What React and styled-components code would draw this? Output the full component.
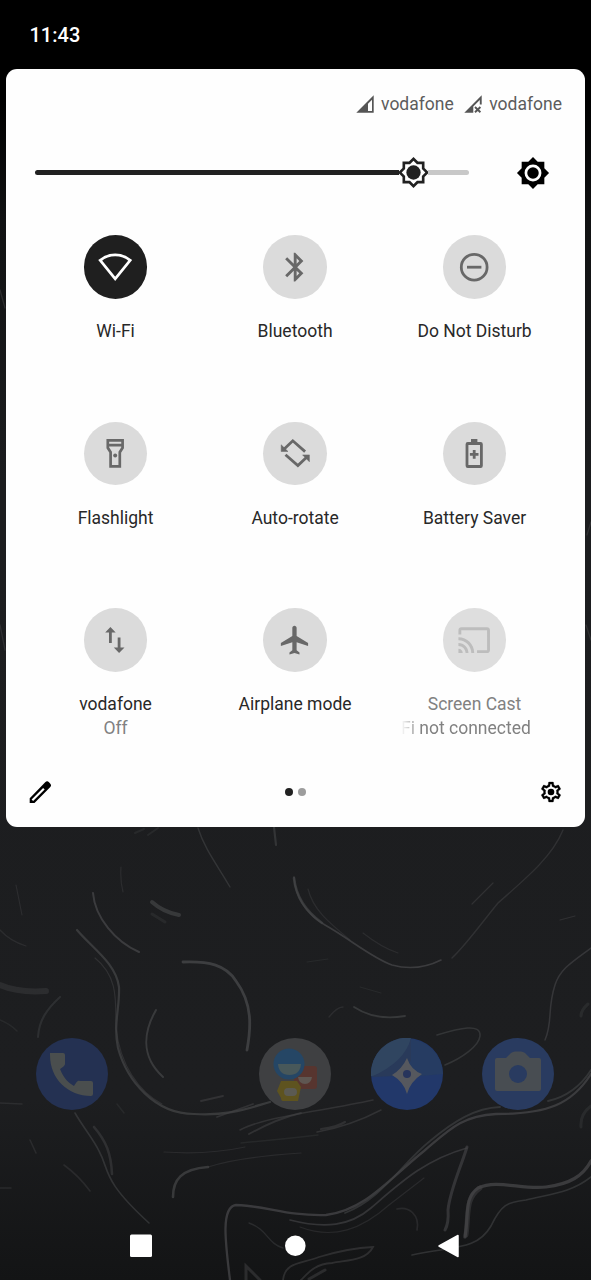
import React from "react";
import styled, { createGlobalStyle } from "styled-components";

const GlobalStyle = createGlobalStyle`
  * { box-sizing: border-box; }
  body { margin: 0; background: #000; font-family: Roboto, "Liberation Sans", sans-serif; }
`;

const Phone = styled.div`
  position: relative;
  width: 591px;
  height: 1280px;
  overflow: hidden;
  display: flex;
  flex-direction: column;
  background: linear-gradient(#000 0, #000 100px, #111213 220px, #1c1d1f 480px, #1d1e20 1100px, #131415 1280px);
`;

const WallpaperArt = styled.svg`
  position: absolute;
  inset: 0;
  fill: none;
  stroke: #434446;
  stroke-linecap: round;
  filter: blur(0.7px);
`;

const StatusBar = styled.header`
  position: relative;
  height: 69px;
  flex: none;
  padding: 23px 29.5px 0;
  background: #000;
  color: #fff;
  font-size: 20px;
  font-weight: 500;
  line-height: 24px;
`;

const Panel = styled.main`
  position: relative;
  flex: none;
  height: 757.5px;
  margin: 0 6px;
  border-radius: 11px;
  background: #fefefe;
  display: flex;
  flex-direction: column;
`;

const Carriers = styled.div`
  display: flex;
  flex: none;
  justify-content: flex-end;
  align-items: center;
  gap: 10.5px;
  height: 24px;
  margin: 22.5px 23px 0 0;
`;

const Carrier = styled.div`
  display: flex;
  align-items: center;
  gap: 7px;
  color: #5c5c5c;
  font-size: 17.5px;
`;

const BrightnessRow = styled.div`
  display: flex;
  align-items: center;
  justify-content: space-between;
  height: 40px;
  flex: none;
  margin: 37px 35px 0 29px;
`;

const Slider = styled.div`
  display: flex;
  align-items: center;
  width: 434px;
`;

const Track = styled.div`
  height: 4.6px;
  width: ${(p) => p.$width}px;
  background: ${(p) => (p.$filled ? "#212121" : "#c8c8c8")};
  border-radius: ${(p) => (p.$filled ? "3px 0 0 3px" : "0 3px 3px 0")};
`;

const Thumb = styled.svg`
  flex: none;
  margin: 0 -2px;
`;

const Tiles = styled.section`
  display: grid;
  flex: none;
  grid-template-columns: repeat(3, 179.5px);
  grid-template-rows: 186.5px 186.5px 132px;
  margin: 42.5px 0 0 19.8px;
`;

const TileBox = styled.div`
  display: flex;
  flex-direction: column;
  align-items: center;
`;

const TileIcon = styled.div`
  display: flex;
  flex: none;
  align-items: center;
  justify-content: center;
  width: 63.6px;
  height: 63.6px;
  border-radius: 50%;
  margin-bottom: 20.8px;
  background: ${(p) => (p.$active ? "#1f1f1f" : p.$disabled ? "#dedede" : "#dbdbdb")};
  color: ${(p) => (p.$active ? "#fff" : p.$disabled ? "#bdbdbd" : "#686868")};
`;

const Label = styled.div`
  height: 23.6px;
  line-height: 24px;
  font-size: 17.5px;
  white-space: nowrap;
  color: ${(p) => (p.$muted ? "#818181" : "#282828")};
`;

const ScrollingLabel = styled(Label)`
  width: 147px;
  -webkit-mask-image: linear-gradient(90deg, transparent 0, #000 20px);
  mask-image: linear-gradient(90deg, transparent 0, #000 20px);
`;

const Footer = styled.footer`
  display: flex;
  align-items: center;
  justify-content: space-between;
  height: 24px;
  flex: none;
  margin: auto 22.5px 22.5px 22px;
`;

const Pager = styled.div`
  display: flex;
  gap: 5.5px;
`;

const Dot = styled.i`
  width: 8px;
  height: 8px;
  border-radius: 50%;
  background: ${(p) => (p.$on ? "#212121" : "#9d9d9d")};
`;

const Dock = styled.nav`
  position: relative;
  display: grid;
  grid-template-columns: repeat(5, 111.6px);
  justify-items: center;
  margin: 211.5px 0 0 16.2px;
  height: 72px;
`;

const NavBar = styled.nav`
  position: relative;
  display: flex;
  justify-content: space-between;
  align-items: center;
  height: 24px;
  margin: 123.5px 131px 0 129px;
`;

const STAR =
  "M20 8.69V4h-4.69L12 .69 8.69 4H4v4.69L.69 12 4 15.31V20h4.69L12 23.31 15.31 20H20v-4.69L23.31 12 20 8.69z";
const GEAR =
  "M19.43 12.98c.04-.32.07-.64.07-.98 0-.34-.03-.66-.07-.98l2.11-1.65c.19-.15.24-.42.12-.64l-2-3.46c-.09-.16-.26-.25-.44-.25-.06 0-.12.01-.17.03l-2.49 1c-.52-.4-1.08-.73-1.69-.98l-.38-2.65C14.46 2.18 14.25 2 14 2h-4c-.25 0-.46.18-.49.42l-.38 2.65c-.61.25-1.17.59-1.69.98l-2.49-1c-.06-.02-.12-.03-.18-.03-.17 0-.34.09-.43.25l-2 3.46c-.13.22-.07.49.12.64l2.11 1.65c-.04.32-.07.65-.07.98 0 .33.03.66.07.98l-2.11 1.65c-.19.15-.24.42-.12.64l2 3.46c.09.16.26.25.44.25.06 0 .12-.01.17-.03l2.49-1c.52.4 1.08.73 1.69.98l.38 2.65c.03.24.24.42.49.42h4c.25 0 .46-.18.49-.42l.38-2.65c.61-.25 1.17-.59 1.69-.98l2.49 1c.06.02.12.03.18.03.17 0 .34-.09.43-.25l2-3.46c.12-.22.07-.49-.12-.64l-2.11-1.65zm-1.98-1.71c.04.31.05.52.05.73 0 .21-.02.43-.05.73l-.14 1.13.89.7 1.08.84-.7 1.21-1.27-.51-1.04-.42-.9.68c-.43.32-.84.56-1.25.73l-1.06.43-.16 1.13-.2 1.35h-1.4l-.19-1.35-.16-1.13-1.06-.43c-.43-.18-.83-.41-1.23-.71l-.91-.7-1.06.43-1.27.51-.7-1.21 1.08-.84.89-.7-.14-1.13c-.03-.31-.05-.54-.05-.74s.02-.43.05-.73l.14-1.13-.89-.7-1.08-.84.7-1.21 1.27.51 1.04.42.9-.68c.43-.32.84-.56 1.25-.73l1.06-.43.16-1.13.2-1.35h1.39l.19 1.35.16 1.13 1.06.43c.43.18.83.41 1.23.71l.91.7 1.06-.43 1.27-.51.7 1.21-1.07.85-.89.7.14 1.13z";

const Glyph = ({ children }) => (
  <svg width="34.4" height="34.4" viewBox="0 0 24 24" fill="currentColor">{children}</svg>
);
const LineGlyph = ({ children }) => (
  <svg width="34.4" height="34.4" viewBox="-17.2 -17.2 34.4 34.4" fill="none" stroke="currentColor" strokeWidth="2.8">{children}</svg>
);

const icons = {
  wifi: <LineGlyph><path d="M-15-6.9C-6-14 6-14 15-6.9L0 11.6Z" /></LineGlyph>,
  bluetooth: (
    <Glyph><path d="M17.71 7.71L12 2h-1v7.59L6.41 5 5 6.41 10.59 12 5 17.59 6.41 19 11 14.41V22h1l5.71-5.71-4.3-4.29 4.3-4.29zM13 5.83l1.88 1.88L13 9.59V5.83zm1.88 10.46L13 18.17v-3.76l1.88 1.88z" /></Glyph>
  ),
  dnd: <LineGlyph><circle r="12.9" /><path d="M-7.2 0H7.2" /></LineGlyph>,
  flashlight: (
    <LineGlyph>
      <path d="M-7.4-12.9H7.4V-5.4L4.6-1V13.2H-4.6V-1L-7.4-5.4ZM-7.4-8H7.4" strokeWidth="2.7" />
      <circle cy="2.4" r="2" fill="currentColor" stroke="none" />
    </LineGlyph>
  ),
  rotate: (
    <LineGlyph>
      <path d="M-11-4.3L-2.4-12.4L9.9-1.6M-9.7 1.5L2.7 12.4L11.2 4.3" />
      <path d="M-14-1.7V-8.4L-7.2-1.7ZM14.2 1.7V8.6L7.4 1.7Z" fill="currentColor" stroke="currentColor" strokeWidth=".5" />
    </LineGlyph>
  ),
  battery: (
    <LineGlyph>
      <rect x="-7.2" y="-9.7" width="14.4" height="23" rx=".8" />
      <path d="M-3.2-12.7H3.2M-4.3 1.2H4.3M0-3.1V5.5" />
    </LineGlyph>
  ),
  data: (
    <LineGlyph>
      <path d="M-4.8 2.8V-9M3.9-2.8V9" />
      <path d="M-10-7.7L-4.8-13.1L.5-7.7ZM-1.4 7.3H9.3L3.9 12.8Z" fill="currentColor" stroke="none" />
    </LineGlyph>
  ),
  airplane: (
    <Glyph><path d="M21 16v-2l-8-5V3.5c0-.83-.67-1.5-1.5-1.5S10 2.67 10 3.5V9l-8 5v2l8-2.5V19l-2 1.5V22l3.5-1 3.5 1v-1.5L13 19v-5.5l8 2.5z" /></Glyph>
  ),
  cast: (
    <Glyph><path d="M21 3H3c-1.1 0-2 .9-2 2v3h2V5h18v14h-7v2h7c1.1 0 2-.9 2-2V5c0-1.1-.9-2-2-2zM1 18v3h3c0-1.66-1.34-3-3-3zm0-4v2c2.76 0 5 2.24 5 5h2c0-3.87-3.13-7-7-7zm0-4v2c4.97 0 9 4.03 9 9h2c0-6.08-4.93-11-11-11z" /></Glyph>
  ),
};

const tiles = [
  { icon: "wifi", label: "Wi-Fi", active: true },
  { icon: "bluetooth", label: "Bluetooth" },
  { icon: "dnd", label: "Do Not Disturb" },
  { icon: "flashlight", label: "Flashlight" },
  { icon: "rotate", label: "Auto-rotate" },
  { icon: "battery", label: "Battery Saver" },
  { icon: "data", label: "vodafone", sub: "Off" },
  { icon: "airplane", label: "Airplane mode" },
  { icon: "cast", label: "Screen Cast", scrolling: "Fi not connected", disabled: true },
];

const Tile = ({ icon, label, sub, scrolling, active, disabled }) => (
  <TileBox>
    <TileIcon $active={active} $disabled={disabled}>{icons[icon]}</TileIcon>
    <Label $muted={disabled}>{label}</Label>
    {sub && <Label $muted>{sub}</Label>}
    {scrolling && <ScrollingLabel $muted>{scrolling}</ScrollingLabel>}
  </TileBox>
);

const Signal = ({ crossed }) => (
  <svg width="18" height="18" viewBox="0 0 18 18">
    {crossed ? (
      <g>
        <path d="M.3 17.7L17.7.3V9.5H15.8V5L9.3 11.5V17.7Z" fill="#555" />
        <path d="M11 12l5.4 5.2M16.4 12L11 17.2" stroke="#555" strokeWidth="1.9" />
      </g>
    ) : (
      <path d="M.3 17.7L17.7.3V17.7ZM16 4.7L12 8.7V16H16Z" fill="#555" fillRule="evenodd" />
    )}
  </svg>
);

// [path, stroke width, opacity]
const strands = [
  ["M198 828C205 850 218 866 230 887", 1.4, 0.6],
  ["M274 827L276 845", 2.2, 0.6],
  ["M294 877C295 898 308 915 325 925C350 939 372 958 392 965C410 970 427 967 441 960", 1.6, 0.8],
  ["M294 878C296 898 308 913 322 923", 2.6, 0.7],
  ["M308 889C313 909 327 921 350 940M363 933C377 944 386 949 398 953", 1.2, 0.4],
  ["M563 830C553 855 530 875 498 903C480 925 466 945 452 958", 1.4, 0.5],
  ["M472 904L493 883M560 920L575 916", 1.2, 0.5],
  ["M93 893C95 918 116 942 139 952", 2, 0.8],
  ["M121 867Q120 880 123 892M16 885L22 915M0 930Q10 941 26 946", 1.2, 0.4],
  ["M152 902Q163 912 179 915", 4, 0.7],
  ["M152 914L165 922", 3, 0.3],
  ["M135 833L144 829M148 835L158 828", 2, 0.3],
  ["M77 930C91 947 116 963 119 987C120 1007 113 1025 118 1048C127 1081 155 1114 194 1114C228 1116 246 1109 270 1102", 2.2, 0.75],
  ["M95 958C120 978 115 1005 116 1028C120 1065 139 1092 162 1104", 1.2, 0.5],
  ["M183 962C209 961 226 965 236 981C253 1004 251 1028 247 1050", 2.8, 0.85],
  ["M156 1010C144 1031 140 1056 163 1077", 2, 0.75],
  ["M0 985Q18 993 46 991", 6, 0.4],
  ["M60 997C47 1009 39 1020 38 1037", 2, 0.45],
  ["M354 1007Q375 1021 405 1016", 1.8, 0.7],
  ["M329 1017Q337 1007 343 1007", 1.3, 0.4],
  ["M360 987L381 993M307 962L328 959", 1.2, 0.3],
  ["M591 948C572 962 560 969 555 985C547 1009 553 1022 545 1040", 1.5, 0.65],
  ["M437 1035C460 1028 481 1023 480 1036C479 1046 462 1058 445 1065", 1.6, 0.6],
  ["M75 1113C83 1127 94 1140 99 1151C110 1171 101 1179 149 1223", 1.6, 0.6],
  ["M94 1127C106 1141 111 1153 112 1174", 2.6, 0.5],
  ["M64 1165Q79 1176 90 1191M0 1103L22 1104M30 1140L36 1153M0 1188H11", 1.6, 0.4],
  ["M117 1104L124 1113M0 1020Q10 1024 17 1031", 1.5, 0.3],
  ["M173 1197C173 1180 181 1169 208 1167", 2.6, 0.75],
  ["M208 1167C235 1158 270 1155 301 1153M164 1152Q208 1155 245 1147", 1.2, 0.4],
  ["M201 1101L223 1096M217 1117L253 1104M249 1134C269 1123 288 1116 301 1113", 1.8, 0.55],
  ["M240 1130C267 1116 318 1112 373 1100M317 1132C339 1128 360 1121 381 1110", 1.5, 0.55],
  ["M321 1129Q337 1127 345 1122", 2.2, 0.5],
  ["M241 1143Q285 1139 318 1135", 1.5, 0.3],
  ["M230 1280C225 1240 221 1207 236 1205C269 1206 285 1216 326 1215C366 1210 390 1178 424 1151C449 1130 461 1116 496 1114C548 1114 572 1104 591 1074", 2.3, 0.8],
  ["M345 1213C383 1198 401 1164 430 1141C454 1121 475 1108 500 1107M548 1101Q575 1095 591 1070", 1.8, 0.6],
  ["M290 1220C325 1229 350 1226 371 1208C399 1184 424 1160 467 1148", 1.7, 0.65],
  ["M300 1227C334 1240 362 1229 389 1205L424 1178", 1.2, 0.4],
  ["M467 1147C461 1167 450 1190 448 1210Q449 1223 445 1230", 3, 0.65],
  ["M465 1237C469 1214 464 1198 478 1188C497 1179 522 1190 546 1187C570 1184 583 1176 591 1161", 3.2, 0.8],
  ["M466 1235C469 1213 465 1199 480 1188", 5, 0.5],
  ["M412 1255C455 1246 477 1250 491 1226C501 1205 507 1202 526 1200C550 1194 571 1193 591 1177", 1.7, 0.6],
  ["M397 1209C409 1206 420 1215 417 1230", 1.7, 0.4],
  ["M249 1223C267 1229 268 1244 283 1248", 1.4, 0.45],
  ["M283 1280C285 1262 300 1264 319 1257Q349 1248 373 1247C366 1261 347 1260 332 1263C315 1264 309 1272 301 1280", 1.8, 0.55],
  ["M246 1280V1266L260 1280M309 1279L325 1270", 3, 0.5],
  ["M591 1106Q580 1114 581 1127M588 1004Q581 1010 581 1016", 3, 0.35],
  ["M0 290L5 308M0 625L5 650M586 625L591 640M587 535L591 522", 1.3, 0.5],
];

const appIcons = {
  phone: (
    <g>
      <circle cx="36" cy="36" r="36" fill="#243152" />
      <path d="M14 15h13q2 0 2 2v9q0 2-5 5c4 10 9 14 14 17 3-5 4-6 6-5h11q2 0 2 2v11q0 2-2 2C32 58 14 41 14 17z" fill="#4a4e4e" />
    </g>
  ),
  people: (
    <g>
      <circle cx="36" cy="36" r="36" fill="#3f4042" />
      <rect x="35" y="28" width="23" height="23" rx="3" fill="#57352f" />
      <path d="M22 43h16l4 6-3 14H24q-2 0-2-3l-4-7z" fill="#5e531f" />
      <rect x="25" y="50" width="13" height="8" rx="4" fill="#5b5a52" />
      <circle cx="30" cy="26" r="15.5" fill="#254665" />
      <path d="M19 26h23q-1 11-11.5 11T19 26z" fill="#48585a" />
      <path d="M39 39h14q-1 7-7 7t-7-7z" fill="#5f5752" />
    </g>
  ),
  gallery: (
    <g>
      <circle cx="36" cy="36" r="36" fill="#22386a" />
      <path d="M0 38A36 36 0 0 1 72 36L50 38H22z" fill="#263c62" />
      <path d="M0 38A36 36 0 0 1 40 0Q36 18 25 31Q15 38 0 38z" fill="#304560" />
      <path d="M40 0Q34 24 0 39L25 38L40 23z" fill="#293a5a" />
      <path d="M36 20Q40 32 51 36Q39 44 36 56Q33 44 21 37Q31 31 36 20z" fill="#56585e" />
      <circle cx="36" cy="36" r="4" fill="#27345c" />
    </g>
  ),
  camera: (
    <g>
      <circle cx="36" cy="36" r="36" fill="#293b60" />
      <path d="M15 20h9l5-5q2-1.5 4-1.5h6q2 0 4 1.5l5 5h9q2 0 2 2v29q0 2-2 2H15q-2 0-2-2V22q0-2 2-2z" fill="#484d52" />
      <circle cx="36" cy="36" r="9" fill="#293b60" />
    </g>
  ),
};

export default function App() {
  return (
    <Phone>
      <GlobalStyle />
      <WallpaperArt width="591" height="1280" viewBox="0 0 591 1280">
        {strands.map(([d, w, o]) => <path key={d} d={d} strokeWidth={w} opacity={o} />)}
      </WallpaperArt>
      <StatusBar>11:43</StatusBar>
      <Panel>
        <Carriers>
          <Carrier><Signal />vodafone</Carrier>
          <Carrier><Signal crossed />vodafone</Carrier>
        </Carriers>
        <BrightnessRow>
          <Slider>
            <Track $filled $width={364} />
            <Thumb width="33" height="33" viewBox="0 0 24 24">
              <path d={STAR} fill="#212121" />
              <path d={STAR} fill="#fff" transform="translate(12 12) scale(.76) translate(-12 -12)" />
              <circle cx="12" cy="12" r="5.2" fill="#212121" />
            </Thumb>
            <Track $width={41} />
          </Slider>
          <svg width="34" height="34" viewBox="0 0 24 24">
            <path d={STAR} />
            <circle cx="12" cy="12" r="5" fill="none" stroke="#fff" strokeWidth="1.9" />
          </svg>
        </BrightnessRow>
        <Tiles>{tiles.map((t) => <Tile key={t.icon} {...t} />)}</Tiles>
        <Footer>
          <svg width="24" height="24" viewBox="0 0 24 24">
            <path d="M1.7 23v-4.8L17.2 2.3a2.7 2.7 0 0 1 3.8 0l1.1 1.1a2.7 2.7 0 0 1 0 3.8L6.5 23z" />
            <path d="M4.4 20.3L15.9 8.7" stroke="#fff" strokeWidth="2.1" />
          </svg>
          <Pager><Dot $on /><Dot /></Pager>
          <svg width="24" height="24" viewBox="0 0 24 24">
            <path d={GEAR} stroke="#000" strokeWidth=".3" />
            <circle cx="12" cy="12" r="3.3" />
          </svg>
        </Footer>
      </Panel>
      <Dock>
        {["phone", null, "people", "gallery", "camera"].map((name, i) =>
          name ? <svg key={i} width="72" height="72" viewBox="0 0 72 72">{appIcons[name]}</svg> : <span key={i} />
        )}
      </Dock>
      <NavBar>
        <svg width="24" height="24"><rect x="1" y=".5" width="22" height="22.5" rx="1.5" fill="#fff" /></svg>
        <svg width="24" height="24"><circle cx="12.3" cy="11.7" r="10.3" fill="#fff" /></svg>
        <svg width="24" height="24"><path d="M22 1.5V22.5L3 12z" fill="#fff" stroke="#fff" strokeWidth="1.5" strokeLinejoin="round" /></svg>
      </NavBar>
    </Phone>
  );
}
